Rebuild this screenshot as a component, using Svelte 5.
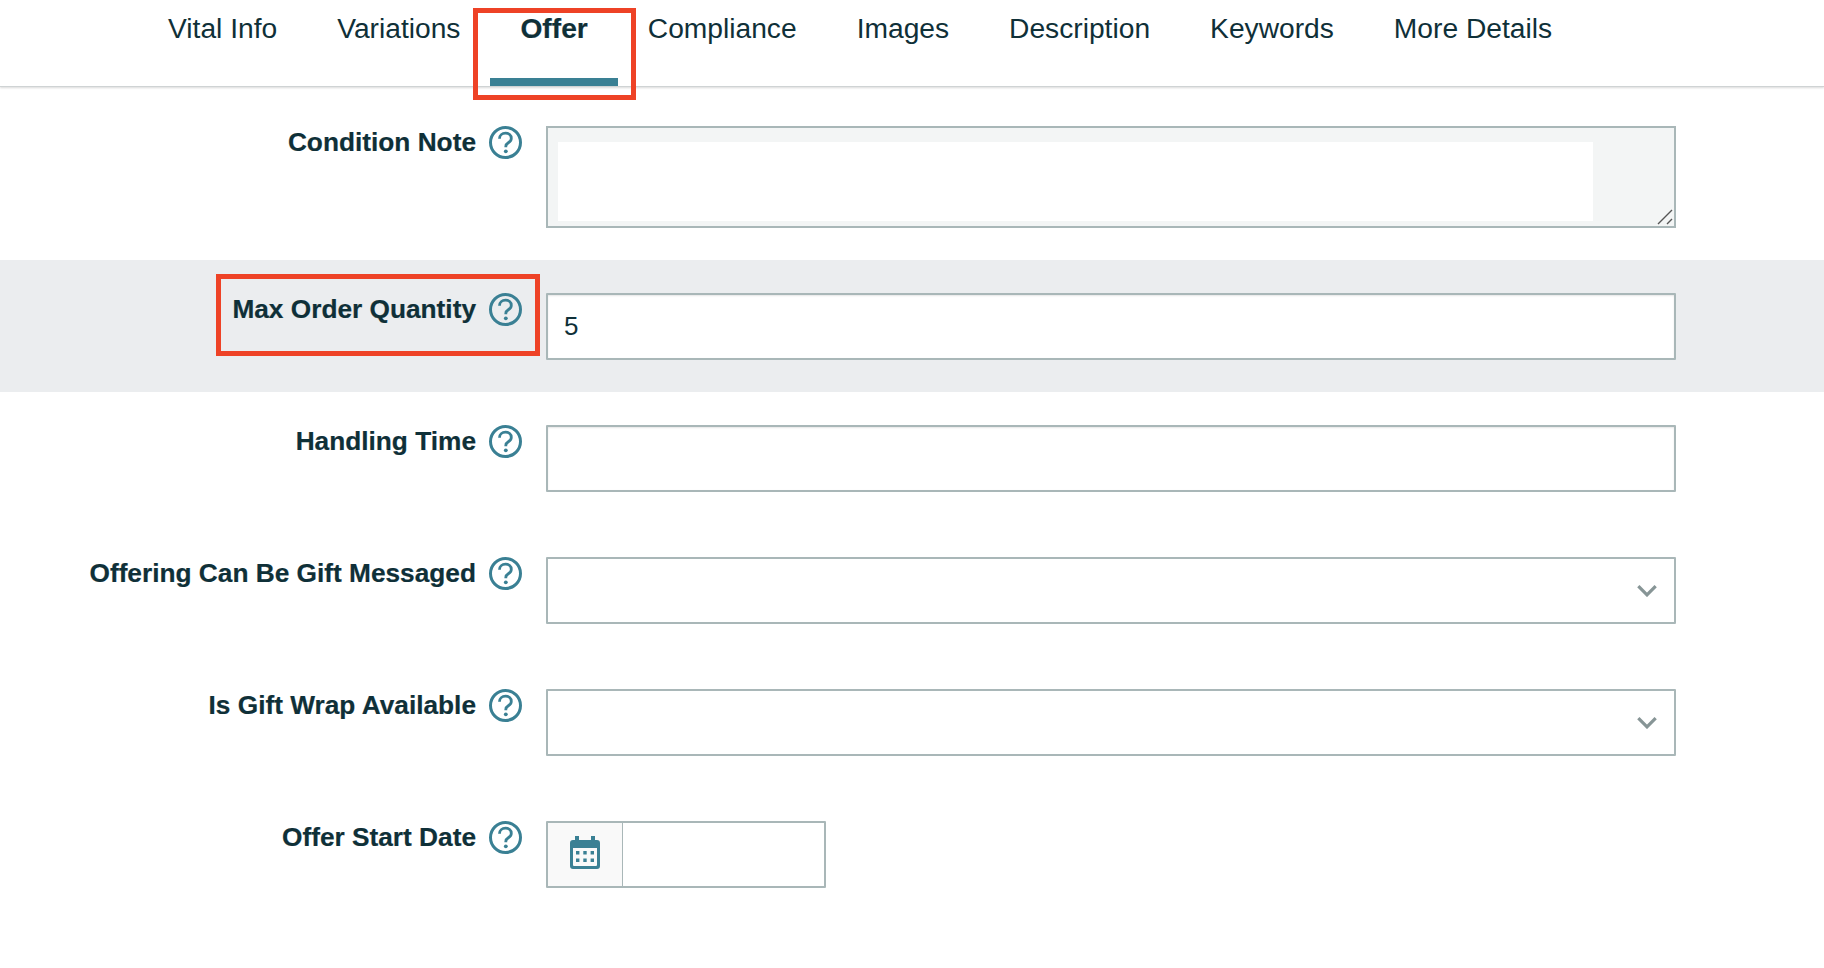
<script>
	const tabs = ['Vital Info', 'Variations', 'Offer', 'Compliance', 'Images', 'Description', 'Keywords', 'More Details'];
	const rows = [
		{ label: 'Handling Time', type: 'input', value: '' },
		{ label: 'Offering Can Be Gift Messaged', type: 'select' },
		{ label: 'Is Gift Wrap Available', type: 'select' },
		{ label: 'Offer Start Date', type: 'date' }
	];
</script>

{#snippet help()}
	<svg class="help" viewBox="0 0 33 33" aria-hidden="true">
		<circle cx="16.5" cy="16.5" r="15" fill="none" stroke="#3a8094" stroke-width="3" />
		<path d="M10.500 12.700c0-3.300 2.600-5.500 6-5.500 3.300 0 5.800 2.100 5.800 5 0 2.200-1.100 3.400-3 4.600-1.800 1.100-2.500 1.900-2.500 3.700v.8" fill="none" stroke="#3a8094" stroke-width="2.800" />
		<circle cx="16.800" cy="25.300" r="1.900" fill="#3a8094" />
	</svg>
{/snippet}

<header class="tabs">
	{#each tabs as tab}
		<div class="tab" class:active={tab === 'Offer'}>
			{tab}
			{#if tab === 'Offer'}<span class="mark mark-tab"></span>{/if}
		</div>
	{/each}
</header>

<main>
	<section class="row first">
		<div class="label">Condition Note</div>
		{@render help()}
		<div class="note">
			<textarea></textarea>
			<svg class="grip" viewBox="0 0 16 16" aria-hidden="true">
				<path d="M1 15 15 1M10 15l5-5" stroke="#555" stroke-width="1.400" fill="none" />
			</svg>
		</div>
	</section>

	<section class="row shaded">
		<span class="mark mark-row"></span>
		<div class="label">Max Order Quantity</div>
		{@render help()}
		<input class="field" type="text" value="5" />
	</section>

	{#each rows as row}
		<section class="row">
			<div class="label">{row.label}</div>
			{@render help()}
			{#if row.type === 'input'}
				<input class="field" type="text" value={row.value} />
			{:else if row.type === 'select'}
				<div class="field select">
					<svg viewBox="0 0 20 12" aria-hidden="true">
						<path d="M2 2l8 8 8-8" fill="none" stroke="#879596" stroke-width="3" />
					</svg>
				</div>
			{:else}
				<div class="field date">
					<div class="cal">
						<svg viewBox="0 0 30 33" aria-hidden="true">
							<path fill="#3a8094" fill-rule="evenodd" d="M5 0h4v4h12V0h4v4h2a3 3 0 0 1 3 3v23a3 3 0 0 1-3 3H3a3 3 0 0 1-3-3V7a3 3 0 0 1 3-3h2zM3 12v17a1 1 0 0 0 1 1h22a1 1 0 0 0 1-1V12zM6 15h3.400v3.400H6zM13.300 15h3.400v3.400h-3.400zM20.600 15H24v3.400h-3.400zM6 22.500h3.400v3.400H6zM13.300 22.500h3.400v3.400h-3.400zM20.600 22.500H24v3.400h-3.400z" />
						</svg>
					</div>
					<input type="text" />
				</div>
			{/if}
		</section>
	{/each}
</main>

<style>
	:global(body) {
		background: #fff;
		color: #0f3038;
		font-family: 'Liberation Sans', Arial, sans-serif;
	}

	.tabs {
		display: flex;
		height: 87px;
		padding-left: 138px;
		border-bottom: 1px solid #cfd3d4;
		box-shadow: 0 1px 2px rgba(0, 0, 0, 0.15);
		box-sizing: border-box;
	}

	.tab {
		position: relative;
		padding: 12px 30px 0;
		font-size: 28.200px;
		line-height: 32px;
		white-space: nowrap;
	}

	.tab.active {
		font-weight: 700;
		height: 86px;
		box-sizing: border-box;
		border-bottom: 8px solid #3a8094;
		-webkit-text-stroke: 0.2px #0f3038;
	}

	.mark {
		position: absolute;
		border: 5px solid #ee4226;
		box-sizing: border-box;
		pointer-events: none;
	}

	.mark-tab {
		left: -17px;
		right: -18px;
		top: 8px;
		height: 92px;
	}

	.mark-row {
		left: 216px;
		top: 14px;
		width: 324px;
		height: 82px;
	}

	.row {
		position: relative;
		display: grid;
		grid-template-columns: 476px 33px 1130px;
		padding: 33px 0 32px;
		align-items: start;
	}

	.row.first {
		padding: 39px 0 32px;
	}

	.row.shaded {
		background: #ebedef;
	}

	.label {
		font-size: 26.250px;
		font-weight: 700;
		line-height: 32px;
		text-align: right;
		-webkit-text-stroke: 0.2px #0f3038;
	}

	.help {
		width: 33px;
		height: 33px;
		margin-left: 13px;
	}

	.row > :nth-last-child(1) {
		margin-left: 37px;
		grid-column: 3;
	}

	.field {
		box-sizing: border-box;
		display: block;
		width: 1130px;
		height: 67px;
		padding: 0 16px;
		background: #fff;
		border: 2px solid #a9b7b8;
		box-shadow: inset 0 1px 2px rgba(0, 0, 0, 0.1);
		font: 26px 'Liberation Sans', Arial, sans-serif;
		color: #0f3038;
		outline: none;
		border-radius: 1px;
	}

	.note {
		position: relative;
		box-sizing: border-box;
		width: 1130px;
		height: 102px;
		padding: 14px 81px 5px 10px;
		background: #f3f5f5;
		border: 2px solid #a9b7b8;
	}

	.note textarea {
		display: block;
		width: 100%;
		height: 100%;
		box-sizing: border-box;
		border: 0;
		padding: 0;
		resize: none;
		background: #fff;
		outline: none;
	}

	.grip {
		position: absolute;
		right: 1px;
		bottom: 1px;
		width: 16px;
		height: 16px;
	}

	.select {
		display: flex;
		align-items: center;
		justify-content: flex-end;
		padding-right: 16px;
		box-shadow: none;
	}

	.select svg {
		width: 22px;
		height: 13px;
	}

	.date {
		display: flex;
		width: 280px;
		padding: 0;
		box-shadow: none;
	}

	.cal {
		display: flex;
		align-items: center;
		justify-content: center;
		width: 75px;
		padding-bottom: 4px;
		box-sizing: border-box;
		background: #f9f9f9;
		border-right: 1px solid #a9b7b8;
	}

	.cal svg {
		width: 30px;
		height: 33px;
	}

	.date input {
		flex: 1;
		min-width: 0;
		border: 0;
		background: #fff;
		outline: none;
	}
</style>
